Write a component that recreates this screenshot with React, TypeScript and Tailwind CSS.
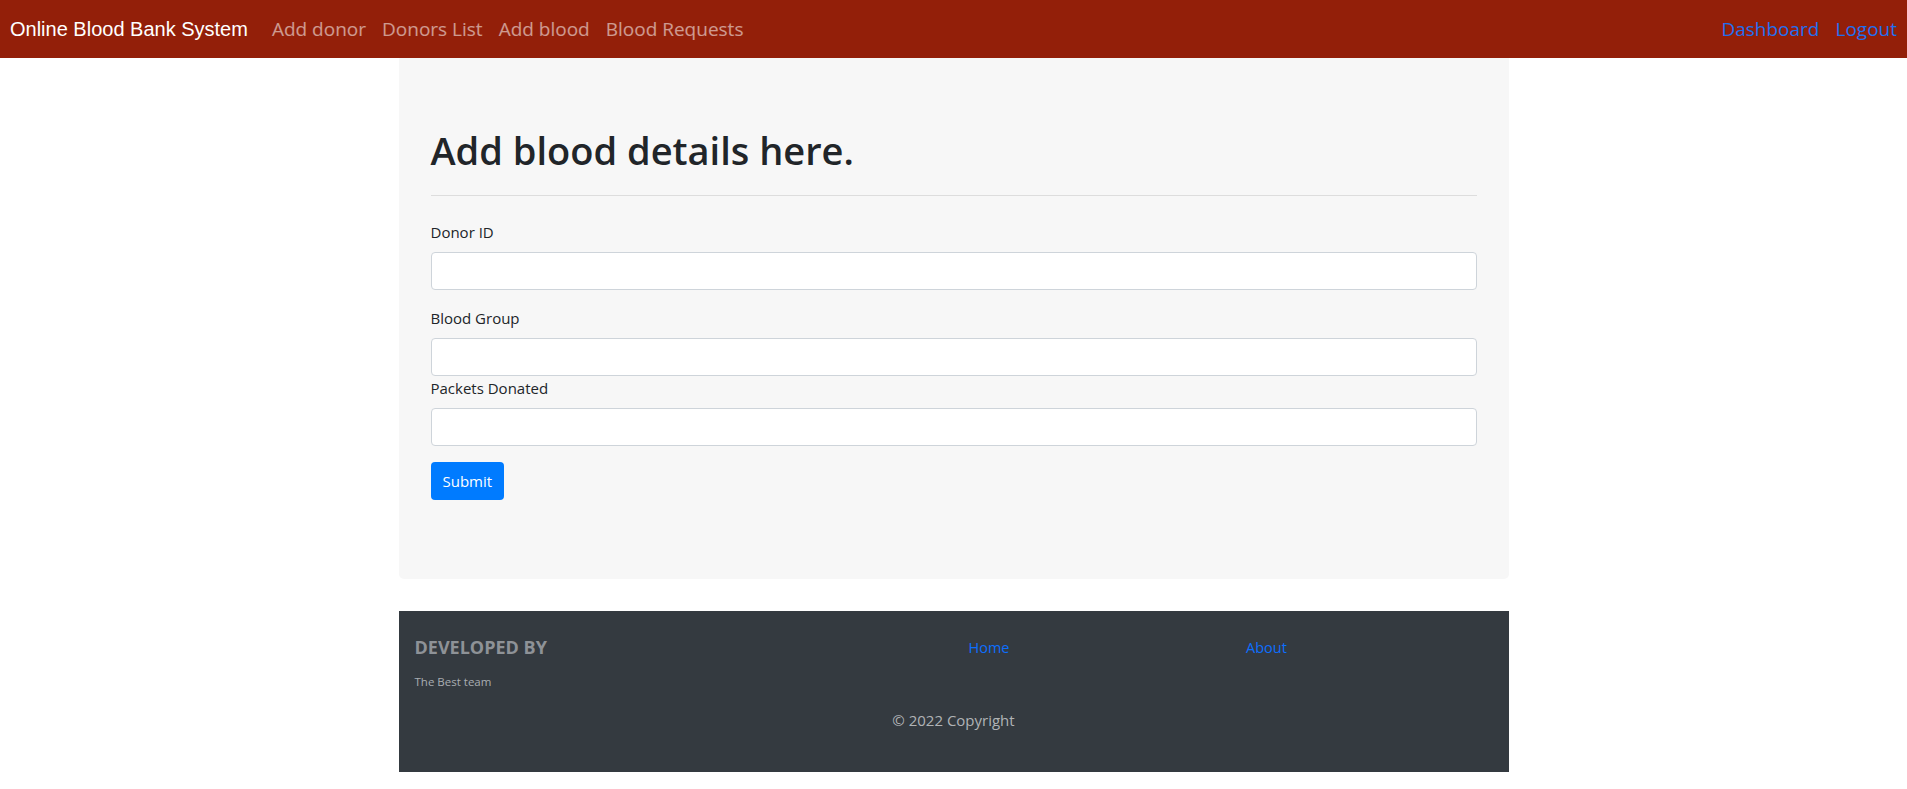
import React from 'react';

const NAV_LINKS = ['Add donor', 'Donors List', 'Add blood', 'Blood Requests'];

const FIELDS = [
  { label: 'Donor ID', gap: 'mb-4' },
  { label: 'Blood Group', gap: 'mb-0' },
  { label: 'Packets Donated', gap: 'mb-4' },
];

const sans = { fontFamily: '"Open Sans", "Noto Sans", sans-serif' };

function Navbar() {
  return (
    <nav className="flex h-[58px] items-center bg-[#931f09] pl-[10px] pr-[2px]">
      <a
        href="#"
        className="mr-4 text-[20px] leading-[30px] text-white"
        style={{ fontFamily: '"Liberation Sans", Arial, sans-serif' }}
      >
        Online Blood Bank System
      </a>
      <ul className="flex items-center" style={sans}>
        {NAV_LINKS.map((l) => (
          <li key={l}>
            <a href="#" className="block px-2 text-[19px] leading-[30px] text-white/55">
              {l}
            </a>
          </li>
        ))}
      </ul>
      <ul className="ml-auto flex items-center" style={sans}>
        <li>
          <a href="#" className="block px-2 text-[19px] leading-[30px] text-[#1f6ff0]">
            Dashboard
          </a>
        </li>
        <li>
          <a href="#" className="block px-2 text-[19px] leading-[30px] text-[#1f6ff0]">
            Logout
          </a>
        </li>
      </ul>
    </nav>
  );
}

function BloodForm() {
  return (
    <div className="mb-8 rounded-b-[5px] bg-[#f7f7f7] px-8 pt-[68px] pb-[79px]">
      <h1 className="mb-0 text-[38px] leading-[48px] font-semibold text-[#212529]">
        Add blood details here.
      </h1>
      <hr className="mt-[21px] mb-6 border-t border-black/10" />
      <form>
        {FIELDS.map((f) => (
          <div key={f.label} className={f.gap}>
            <label className="mb-2 block text-[15px] leading-6 text-[#212529]">
              {f.label}
            </label>
            <input
              type="text"
              className="block h-[38px] w-full rounded-[4px] border border-[#ced4da] bg-white px-3"
            />
          </div>
        ))}
        <button
          type="submit"
          className="h-[38px] rounded-[4px] bg-[#007bff] px-3 text-[15px] leading-6 text-white"
        >
          Submit
        </button>
      </form>
    </div>
  );
}

function Footer() {
  return (
    <footer className="bg-[#343a40] pt-6 pb-[40px]" style={sans}>
      <div className="flex">
        <div className="w-1/2 pl-4">
          <h5 className="mb-[13px] text-[18px] leading-6 font-bold text-[#8e9297] uppercase">
            Developed by
          </h5>
          <p className="text-[11.5px] leading-5 text-[#a9adb1]">The Best team</p>
        </div>
        <div className="w-1/4 pl-[15px]">
          <a href="#" className="text-[14.5px] leading-6 text-[#0d6efd]">
            Home
          </a>
        </div>
        <div className="w-1/4 pl-[15px]">
          <a href="#" className="text-[14.5px] leading-6 text-[#0d6efd]">
            About
          </a>
        </div>
      </div>
      <div className="mt-4 text-center text-[15px] leading-6 text-[#b0b3b6]">
        © 2022 Copyright
      </div>
    </footer>
  );
}

export default function App() {
  return (
    <div className="min-h-screen bg-white" style={sans}>
      <Navbar />
      <main className="mx-auto w-[1110px]">
        <BloodForm />
        <Footer />
      </main>
    </div>
  );
}
